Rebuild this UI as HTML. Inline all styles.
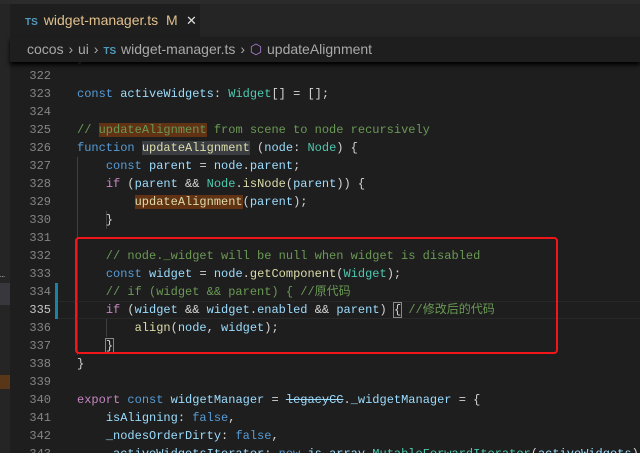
<!DOCTYPE html>
<html style="overflow:hidden;height:453px"><head><meta charset="utf-8"><style>
*{margin:0;padding:0;box-sizing:border-box}
body{width:640px;height:453px;overflow:hidden;background:#1e1e1e;font-family:"Liberation Mono","Noto Sans CJK SC",monospace;font-size:12px;position:relative}
.tabbar{position:absolute;left:0;top:0;width:640px;height:37px;background:#252526;border-top:4px solid #2b2b2b}
.tab{position:absolute;left:10px;top:4px;width:190px;height:33px;background:#1e1e1e;font-family:"Liberation Sans",sans-serif;font-size:14px;color:#e2c08d;line-height:33px;padding-left:15px}
.tab .ts{color:#519aba;font-size:10px;font-weight:bold;margin-right:6px}
.tab .x{color:#ddd;position:absolute;left:176px;font-size:13px}
.crumb{position:absolute;left:10px;top:37px;width:630px;height:25px;background:#1e1e1e;font-family:"Liberation Sans",sans-serif;font-size:14px;color:#a9a9a9;line-height:25px;padding-left:17px;box-shadow:0 3px 4px #000;z-index:5;word-spacing:1px}
.crumb .ts{color:#519aba;font-size:10px;font-weight:bold}
.side{position:absolute;left:0;top:37px;width:10px;height:416px;background:#252526}
.ln{position:absolute;left:10px;width:41px;text-align:right;color:#858585;height:18px;line-height:19px}
.cl{position:absolute;left:77px;height:18px;line-height:19px;white-space:pre;color:#d4d4d4}
.k{color:#569cd6}.v{color:#9cdcfe}.t{color:#4ec9b0}.f{color:#dcdcaa}.c{color:#6a9955}.p{color:#c586c0}
.hb{background:#613214}.hg{background:#3a3d41}
.guide{position:absolute;width:1px;background:#404040}
</style></head><body>
<div class="tabbar"></div>
<div class="tab"><span class="ts">TS</span>widget-manager.ts&nbsp; M<span class="x">✕</span></div>
<div class="side"></div>
<div style="position:absolute;left:0;top:272px;width:10px;height:7px;color:#ccc;font-size:8px;line-height:7px">…</div>
<div style="position:absolute;left:0;top:283px;width:10px;height:22px;background:#37373d"></div>
<div style="position:absolute;left:0;top:375px;width:10px;height:14px;background:#5a3618"></div>
<div class="crumb">cocos › ui › <span class="ts">TS</span> widget-manager.ts › <span style="color:#b180d7">⬡</span> updateAlignment</div>
<div class="guide" style="left:77px;top:157px;height:198px"></div>
<div class="guide" style="left:106px;top:211px;height:18px"></div>
<div class="guide" style="left:106px;top:319px;height:18px"></div>
<div style="position:absolute;left:56px;top:301px;width:584px;height:18px;border-top:1px solid #282828;border-bottom:1px solid #282828"></div>
<div style="position:absolute;left:55px;top:283px;width:3px;height:36px;background:#1b81a8"></div>
<div style="position:absolute;left:75px;top:237px;width:483px;height:117px;border:2px solid #f0161a;border-radius:4px;z-index:3"></div>

<div class="ln" style="top:49px">321</div><div class="cl" style="top:49px">}</div>
<div class="ln" style="top:67px">322</div>
<div class="ln" style="top:85px">323</div><div class="cl" style="top:85px"><span class="k">const</span> <span class="v">activeWidgets</span>: <span class="t">Widget</span>[] = [];</div>
<div class="ln" style="top:103px">324</div>
<div class="ln" style="top:121px">325</div><div class="cl c" style="top:121px">// <span class="hb">updateAlignment</span> from scene to node recursively</div>
<div class="ln" style="top:139px">326</div><div class="cl" style="top:139px"><span class="k">function</span> <span class="f hg">updateAlignment</span> (<span class="v">node</span>: <span class="t">Node</span>) {</div>
<div class="ln" style="top:157px">327</div><div class="cl" style="top:157px">    <span class="k">const</span> <span class="v">parent</span> = <span class="v">node</span>.<span class="v">parent</span>;</div>
<div class="ln" style="top:175px">328</div><div class="cl" style="top:175px">    <span class="p">if</span> (<span class="v">parent</span> &amp;&amp; <span class="t">Node</span>.<span class="f">isNode</span>(<span class="v">parent</span>)) {</div>
<div class="ln" style="top:193px">329</div><div class="cl" style="top:193px">        <span class="f hb">updateAlignment</span>(<span class="v">parent</span>);</div>
<div class="ln" style="top:211px">330</div><div class="cl" style="top:211px">    }</div>
<div class="ln" style="top:229px">331</div>
<div class="ln" style="top:247px">332</div><div class="cl c" style="top:247px">    // node._widget will be null when widget is disabled</div>
<div class="ln" style="top:265px">333</div><div class="cl" style="top:265px">    <span class="k">const</span> <span class="v">widget</span> = <span class="v">node</span>.<span class="f">getComponent</span>(<span class="t">Widget</span>);</div>
<div class="ln" style="top:283px">334</div><div class="cl c" style="top:283px">    // if (widget &amp;&amp; parent) { //原代码</div>
<div class="ln" style="top:301px;color:#c6c6c6">335</div><div class="cl" style="top:301px">    <span class="p">if</span> (<span class="v">widget</span> &amp;&amp; <span class="v">widget</span>.<span class="v">enabled</span> &amp;&amp; <span class="v">parent</span>) <span style="outline:1px solid #888">{</span> <span class="c">//修改后的代码</span></div>
<div class="ln" style="top:319px">336</div><div class="cl" style="top:319px">        <span class="f">align</span>(<span class="v">node</span>, <span class="v">widget</span>);</div>
<div class="ln" style="top:337px">337</div><div class="cl" style="top:337px">    <span style="outline:1px solid #888">}</span></div>
<div class="ln" style="top:355px">338</div><div class="cl" style="top:355px">}</div>
<div class="ln" style="top:373px">339</div>
<div class="ln" style="top:391px">340</div><div class="cl" style="top:391px"><span class="p">export</span> <span class="k">const</span> <span class="v">widgetManager</span> = <span class="v" style="text-decoration:line-through">legacyCC</span>.<span class="v">_widgetManager</span> = {</div>
<div class="ln" style="top:409px">341</div><div class="cl" style="top:409px">    <span class="v">isAligning</span>: <span class="k">false</span>,</div>
<div class="ln" style="top:427px">342</div><div class="cl" style="top:427px">    <span class="v">_nodesOrderDirty</span>: <span class="k">false</span>,</div>
<div class="ln" style="top:445px">343</div><div class="cl" style="top:445px">    <span class="v">_activeWidgetsIterator</span>: <span class="k">new</span> <span class="v">js</span>.<span class="v">array</span>.<span class="t">MutableForwardIterator</span>(<span class="v">activeWidgets</span>),</div>
</body></html>
